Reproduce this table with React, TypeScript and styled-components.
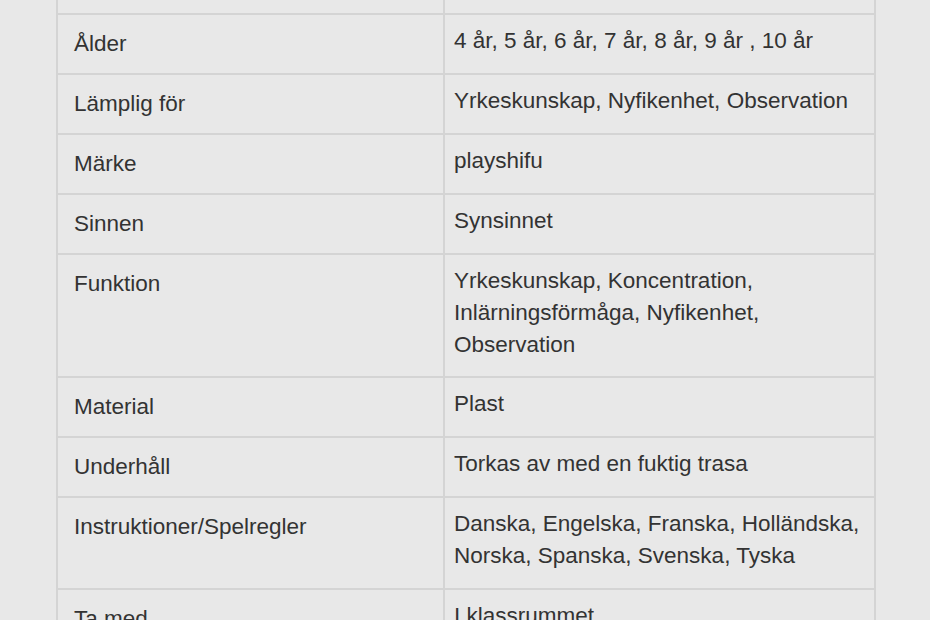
import React from "react";
import styled, { createGlobalStyle } from "styled-components";

const Global = createGlobalStyle`
  html, body {
    margin: 0;
    padding: 0;
    background: #e8e8e8;
    overflow: hidden;
  }
`;

const Page = styled.div`
  width: 930px;
  height: 620px;
  overflow: hidden;
  background: #e8e8e8;
  padding-left: 56px;
  box-sizing: border-box;
  font-family: "Liberation Sans", Arial, sans-serif;
  color: #333333;
`;

const Table = styled.table`
  width: 820px;
  table-layout: fixed;
  border-collapse: collapse;
  margin-top: -9px;
`;

const Row = styled.tr``;

const LabelCell = styled.th`
  border: 2px solid #d4d4d4;
  text-align: left;
  font-weight: normal;
  vertical-align: top;
  font-size: 22.5px;
  line-height: 32px;
  padding: 13px 10px 13px 16px;
`;

const ValueCell = styled.td`
  border: 2px solid #d4d4d4;
  vertical-align: top;
  font-size: 22.5px;
  line-height: 31.8px;
  padding: 10px 12px 16px 9px;
`;

const SpacerCell = styled.td<{ $h: number }>`
  border: 2px solid #d4d4d4;
  height: ${(p) => p.$h}px;
  padding: 0;
`;

const rows: [string, string][] = [
  ["Ålder", "4 år, 5 år, 6 år, 7 år, 8 år, 9 år , 10 år"],
  ["Lämplig för", "Yrkeskunskap, Nyfikenhet, Observation"],
  ["Märke", "playshifu"],
  ["Sinnen", "Synsinnet"],
  ["Funktion", "Yrkeskunskap, Koncentration, Inlärningsförmåga, Nyfikenhet, Observation"],
  ["Material", "Plast"],
  ["Underhåll", "Torkas av med en fuktig trasa"],
  ["Instruktioner/Spelregler", "Danska, Engelska, Franska, Holländska, Norska, Spanska, Svenska, Tyska"],
  ["Ta med", "I klassrummet"],
];

export default function App() {
  return (
    <Page>
      <Global />
      <Table>
        <colgroup>
          <col style={{ width: 387 }} />
          <col />
        </colgroup>
        <tbody>
          <Row>
            <SpacerCell $h={20} />
            <SpacerCell $h={20} />
          </Row>
          {rows.map(([k, v]) => (
            <Row key={k}>
              <LabelCell scope="row">{k}</LabelCell>
              <ValueCell>{v}</ValueCell>
            </Row>
          ))}
        </tbody>
      </Table>
    </Page>
  );
}
